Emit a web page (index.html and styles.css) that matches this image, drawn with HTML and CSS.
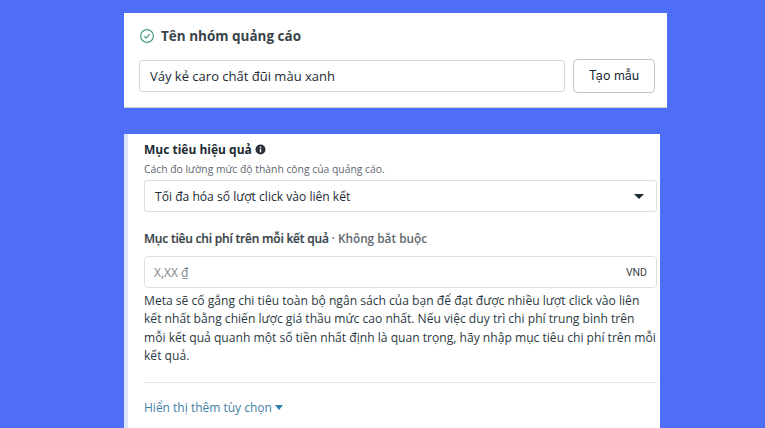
FILE: index.html
```html
<!DOCTYPE html>
<html lang="vi">
<head>
    <meta charset="UTF-8">
    <meta name="viewport" content="width=device-width, initial-scale=1.0">
    <title>Nhóm quảng cáo</title>
    <link rel="stylesheet" href="styles.css">
</head>
<body>
    <section class="card name-card">
        <div class="name-title">
            <svg class="check-icon" width="16" height="16" viewBox="0 0 16 16" fill="none">
                <circle cx="8" cy="8" r="6.4" stroke="#4f9a87" stroke-width="1.2"/>
                <path d="M5.2 8.2l2 2 3.6-4" stroke="#4f9a87" stroke-width="1.2"/>
            </svg>
            <span>Tên nhóm quảng cáo</span>
        </div>
        <div class="name-row">
            <div class="name-input">Váy kẻ caro chất đũi màu xanh</div>
            <div class="template-btn">Tạo mẫu</div>
        </div>
    </section>

    <section class="card goal-card">
        <div class="goal-title">
            <span>Mục tiêu hiệu quả</span>
            <svg width="11" height="11" viewBox="0 0 11 11">
                <circle cx="5.5" cy="5.5" r="5" fill="#2b3138"/>
                <rect x="4.8" y="4.7" width="1.4" height="3.6" fill="#fff"/>
                <rect x="4.8" y="2.7" width="1.4" height="1.3" fill="#fff"/>
            </svg>
        </div>
        <p class="goal-hint">Cách đo lường mức độ thành công của quảng cáo.</p>
        <div class="select-box">
            <span>Tối đa hóa số lượt click vào liên kết</span>
            <span class="caret"></span>
        </div>

        <div class="cost-title">Mục tiêu chi phí trên mỗi kết quả <span class="optional">· Không bắt buộc</span></div>
        <div class="cost-input">
            <span class="placeholder">X,XX ₫</span>
            <span class="currency">VND</span>
        </div>
        <p class="cost-desc">Meta sẽ cố gắng chi tiêu toàn bộ ngân sách của bạn để đạt được nhiều lượt click vào liên kết nhất bằng chiến lược giá thầu mức cao nhất. Nếu việc duy trì chi phí trung bình trên mỗi kết quả quanh một số tiền nhất định là quan trọng, hãy nhập mục tiêu chi phí trên mỗi kết quả.</p>

        <div class="more-row">
            <span>Hiển thị thêm tùy chọn</span>
            <span class="more-caret"></span>
        </div>
    </section>
</body>
</html>
```

FILE: styles.css
```css
* {
    margin: 0;
    padding: 0;
    box-sizing: border-box;
}

body {
    font-family: 'Open Sans', sans-serif;
    background: #4f6ef7;
    color: #1c2b33;
    height: 428px;
    overflow: hidden;
    padding-top: 13px;
}

.card {
    background: #fff;
}

/* Ad set name */
.name-card {
    width: 543px;
    height: 95px;
    margin-left: 124px;
    padding: 14px 12px 0 15px;
    border-bottom: 1px solid #ccd0d8;
}

.name-title {
    display: flex;
    align-items: center;
    gap: 6px;
    font-size: 13.5px;
    font-weight: 700;
    color: #38434a;
    height: 17px;
}

.name-row {
    display: flex;
    align-items: center;
    gap: 8px;
    margin-top: 15px;
}

.name-input {
    width: 426px;
    height: 32px;
    border: 1px solid #d5d8dc;
    border-radius: 3px;
    padding-left: 10px;
    font-size: 13px;
    line-height: 30px;
}

.template-btn {
    width: 82px;
    height: 34px;
    border: 1px solid #c2c6cc;
    border-radius: 4px;
    text-align: center;
    font-family: 'Inter', sans-serif;
    font-size: 12.5px;
    line-height: 31px;
}

/* Performance goal */
.goal-card {
    width: 536px;
    height: 294px;
    margin: 26px 0 0 124px;
    padding: 6px 3px 0 16px;
    border-left: 4px solid #dbe6fb;
    font-size: 12px;
}

.goal-title {
    display: flex;
    align-items: center;
    gap: 3px;
    font-weight: 700;
    height: 18px;
    font-size: 12px;
}

.goal-hint {
    font-size: 10.35px;
    color: #606770;
    height: 14px;
    line-height: 14px;
    margin-top: 4px;
}

.select-box {
    display: flex;
    justify-content: space-between;
    align-items: center;
    height: 32px;
    margin-top: 4px;
    border: 1px solid #dcdee1;
    border-radius: 3px;
    padding: 0 12px 0 10px;
    font-size: 12.1px;
}

.caret {
    border-left: 5px solid transparent;
    border-right: 5px solid transparent;
    border-top: 5px solid #1c2b33;
}

.cost-title {
    font-size: 12px;
    font-weight: 600;
    -webkit-text-stroke: 0.2px #38434a;
    letter-spacing: -0.21px;
    color: #38434a;
    height: 18px;
    line-height: 18px;
    margin-top: 17px;
}

.optional {
    font-size: 11.8px;
    font-weight: 600;
    letter-spacing: 0;
    -webkit-text-stroke: 0;
    color: #5f686e;
}

.cost-input {
    display: flex;
    justify-content: space-between;
    align-items: center;
    height: 32px;
    margin-top: 9px;
    border: 1px solid #dcdee1;
    border-radius: 4px;
    padding: 0 9px;
}

.placeholder {
    color: #7d848b;
    font-size: 12px;
}

.currency {
    font-family: 'Roboto', sans-serif;
    font-size: 10.5px;
    color: #38434a;
}

.cost-desc {
    font-size: 12.1px;
    line-height: 18.3px;
    margin-top: 4px;
    padding-bottom: 17px;
    border-bottom: 1px solid #e1e3e5;
    color: #2c3a42;
}

.more-row {
    display: flex;
    align-items: center;
    gap: 3px;
    margin-top: 16px;
    color: #3f7fa8;
}

.more-caret {
    border-left: 4.5px solid transparent;
    border-right: 4.5px solid transparent;
    border-top: 5px solid #2f7fb0;
}
```
